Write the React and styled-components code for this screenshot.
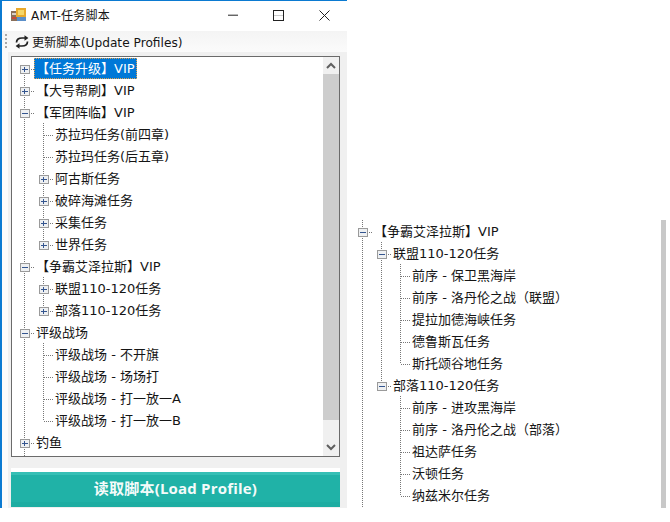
import styled, { createGlobalStyle } from 'styled-components'

const GlobalStyle = createGlobalStyle`
html, body {
    margin: 0;
    background: #fff;
}
`

const Page = styled.div`
display: flex;
align-items: flex-start;
width: 670px;
height: 522px;
overflow: hidden;
font-family: "DejaVu Sans", "Noto Sans CJK SC", sans-serif;
font-size: 13px;
color: #151515;
`

const Window = styled.div`
display: flex;
flex-direction: column;
flex: none;
width: 345px;
height: 507px;
border-top: 1px solid #0b7ad1;
border-left: 2px solid #0b7ad1;
background: #fff;
`

const TitleBar = styled.div`
display: flex;
align-items: center;
flex: none;
height: 28px;
padding: 0 0 2px 9px;
`

const AppIcon = styled.svg`
flex: none;
width: 15px;
height: 14px;
margin-right: 5px;
`

const Title = styled.div`
flex: 1;
margin-bottom: 2px;
font-size: 12px;
letter-spacing: 0.25px;
`

const WinButton = styled.div`
display: flex;
align-items: center;
justify-content: center;
flex: none;
width: 45.5px;
height: 28px;
`

const Toolbar = styled.div`
display: flex;
align-items: center;
flex: none;
height: 21px;
padding-left: 3px;
background: linear-gradient(#f4f4f4, #fbfbfb);
`

const Grip = styled.div`
flex: none;
width: 2px;
height: 15px;
margin-right: 8px;
background: repeating-linear-gradient(#a8a8a8 0 2px, transparent 2px 4px);
`

const ToolIcon = styled.svg`
flex: none;
width: 14px;
height: 14px;
margin-right: 3px;
`

const ToolLabel = styled.div`
font-size: 12.2px;
`

const Body = styled.div`
display: flex;
flex-direction: column;
flex: 1;
padding: 4px 7px 1px 3px;
border-left: 6px solid #fbfbfb;
background: #f0f0f0;
`

const TreeBox = styled.div`
display: flex;
flex: none;
height: 399px;
border: 1px solid #6b6b6b;
background: #fff;
`

const TreeScroll = styled.div`
flex: 1;
height: 399px;
padding-left: 3px;
overflow: hidden;
`

const Row = styled.div`
display: flex;
align-items: center;
height: 22px;
white-space: nowrap;
`

const Guides = styled.svg`
display: block;
flex: none;
width: ${({ $cells }) => $cells * 19}px;
height: 22px;
`

const Label = styled.div`
height: 21px;
margin-top: 1px;
padding: 0 2px;
line-height: 22px;
box-sizing: border-box;
color: ${({ $selected }) => ($selected ? '#fff' : 'inherit')};
background: ${({ $selected }) => ($selected ? '#0078d7' : 'transparent')};
outline: ${({ $selected }) => ($selected ? '1px dotted #e0a050' : 'none')};
outline-offset: -1px;
`

const ScrollBar = styled.div`
display: flex;
flex-direction: column;
flex: none;
width: 16px;
background: #f0f0f0;
`

const ScrollArrow = styled.div`
display: flex;
align-items: center;
justify-content: center;
flex: none;
height: 17px;
`

const ScrollThumb = styled.div`
flex: none;
height: 346px;
background: #cdcdcd;
`

const ScrollTrack = styled.div`
flex: 1;
`

const LoadButton = styled.div`
display: flex;
align-items: center;
justify-content: center;
flex: none;
height: 39px;
margin-top: 11px;
padding-bottom: 4px;
box-sizing: border-box;
border-top: 4px solid #fff;
box-shadow: inset 0 3px 0 #35bfb5, inset 0 -5px 0 #1dada2;
background: #20b2a7;
color: #f4fbfa;
font-family: "Open Sans", "Noto Sans CJK SC", sans-serif;
font-size: 15px;
font-weight: 700;
letter-spacing: 0.2px;
`

const SidePanel = styled.div`
flex: none;
display: flex;
width: 323px;
height: 288px;
margin-top: 220px;
`

const SideTree = styled.div`
flex: 1;
padding-left: 6px;
overflow: hidden;
`

const SideBar = styled.div`
flex: none;
width: 5px;
margin-right: 4px;
background: #c8c8c8;
`

const Chevron = ({ down }) => (
    <svg width="10" height="7" viewBox="0 0 10 7">
        <path d={down ? 'M1 1l4 4 4-4' : 'M1 6l4-4 4 4'} fill="none" stroke="#5f5f5f" strokeWidth="2" />
    </svg>
)

// up, down, right: which dotted arms the cell has. box: '+' or '-'
const CELLS = {
    ' ': {},
    '|': { up: 1, down: 1 },
    T: { up: 1, down: 1, right: 1 },
    L: { up: 1, right: 1 },
    '+': { up: 1, down: 1, right: 1, box: '+' },
    '-': { up: 1, down: 1, right: 1, box: '-' },
    f: { down: 1, right: 1, box: '+' },
    e: { up: 1, right: 1, box: '+' },
    m: { up: 1, right: 1, box: '-' },
}

const Cell = ({ kind, index }) => {
    const c = CELLS[kind]
    const x = index * 19 + 9.5
    return (
        <g shapeRendering="crispEdges">
            {c.up && <line x1={x} y1="0" x2={x} y2="12" stroke="#777" strokeDasharray="1 1" />}
            {c.down && <line x1={x} y1="12" x2={x} y2="22" stroke="#777" strokeDasharray="1 1" />}
            {c.right && <line x1={x} y1="12.5" x2={x + 9.5} y2="12.5" stroke="#777" strokeDasharray="1 1" />}
            {c.box && (
                <>
                    <rect x={x - 4.5} y="8.5" width="9" height="8" fill="#eef0f2" stroke="#9a9a9a" />
                    <line x1={x - 2.5} y1="12.5" x2={x + 3} y2="12.5" stroke="#34558f" />
                    {c.box === '+' && <line x1={x} y1="10" x2={x} y2="15" stroke="#34558f" />}
                </>
            )}
        </g>
    )
}

const TreeRow = ({ g, t, selected }) => (
    <Row>
        <Guides $cells={g.length} viewBox={`0 0 ${g.length * 19} 22`}>
            {g.split('').map((kind, i) => (
                <Cell key={i} kind={kind} index={i} />
            ))}
        </Guides>
        {t && <Label $selected={selected}>{t}</Label>}
    </Row>
)

const mainRows = [
    { g: 'f', t: '【任务升级】VIP', selected: true },
    { g: '+', t: '【大号帮刷】VIP' },
    { g: '-', t: '【军团阵临】VIP' },
    { g: '|T', t: '苏拉玛任务(前四章)' },
    { g: '|T', t: '苏拉玛任务(后五章)' },
    { g: '|+', t: '阿古斯任务' },
    { g: '|+', t: '破碎海滩任务' },
    { g: '|+', t: '采集任务' },
    { g: '|e', t: '世界任务' },
    { g: '-', t: '【争霸艾泽拉斯】VIP' },
    { g: '|+', t: '联盟110-120任务' },
    { g: '|e', t: '部落110-120任务' },
    { g: '-', t: '评级战场' },
    { g: '|T', t: '评级战场 - 不开旗' },
    { g: '|T', t: '评级战场 - 场场打' },
    { g: '|T', t: '评级战场 - 打一放一A' },
    { g: '|L', t: '评级战场 - 打一放一B' },
    { g: '+', t: '钓鱼' },
    { g: '|' },
]

const sideRows = [
    { g: '-', t: '【争霸艾泽拉斯】VIP' },
    { g: '|-', t: '联盟110-120任务' },
    { g: '||T', t: '前序 - 保卫黑海岸' },
    { g: '||T', t: '前序 - 洛丹伦之战（联盟）' },
    { g: '||T', t: '提拉加德海峡任务' },
    { g: '||T', t: '德鲁斯瓦任务' },
    { g: '||L', t: '斯托颂谷地任务' },
    { g: '|m', t: '部落110-120任务' },
    { g: '| T', t: '前序 - 进攻黑海岸' },
    { g: '| T', t: '前序 - 洛丹伦之战（部落）' },
    { g: '| T', t: '祖达萨任务' },
    { g: '| T', t: '沃顿任务' },
    { g: '| L', t: '纳兹米尔任务' },
    { g: '|' },
]

const App = () => {
    return (
        <Page>
            <GlobalStyle />
            <Window>
                <TitleBar>
                    <AppIcon viewBox="0 0 15 14">
                        <rect x="0" y="3" width="6" height="10" fill="#8a6f5a" />
                        <rect x="1" y="5" width="4" height="2" fill="#d8d0c8" />
                        <rect x="1" y="9" width="4" height="2" fill="#c9483a" />
                        <rect x="5" y="0" width="10" height="9" fill="#e8a92c" />
                        <rect x="7" y="2" width="6" height="5" fill="#f7d768" />
                        <rect x="6" y="9" width="9" height="4" fill="#5b8fc9" />
                    </AppIcon>
                    <Title>AMT-任务脚本</Title>
                    <WinButton>
                        <svg width="10" height="3" viewBox="0 0 10 3">
                            <rect width="10" height="1" y="1" fill="#666" />
                            <rect width="10" height="1" y="0" fill="#bbb" />
                        </svg>
                    </WinButton>
                    <WinButton>
                        <svg width="11" height="11" viewBox="0 0 11 11">
                            <rect x="0.5" y="0.5" width="10" height="10" fill="none" stroke="#222" />
                            <line x1="1" y1="5.5" x2="10" y2="5.5" stroke="#ccc" />
                        </svg>
                    </WinButton>
                    <WinButton>
                        <svg width="11" height="11" viewBox="0 0 11 11">
                            <path d="M0.5 0.5l10 10M10.5 0.5l-10 10" stroke="#222" fill="none" />
                        </svg>
                    </WinButton>
                </TitleBar>
                <Toolbar>
                    <Grip />
                    <ToolIcon viewBox="0 0 14 14">
                        <path d="M1.5 7.5C1.5 4.5 4 3 7 3h3" fill="none" stroke="#222" strokeWidth="1.7" />
                        <path d="M9.5 0.2L13.4 3 9.5 5.8z" fill="#222" />
                        <path d="M12.5 6.5C12.5 9.5 10 11 7 11H4" fill="none" stroke="#222" strokeWidth="1.7" />
                        <path d="M4.5 8.2L0.6 11l3.9 2.8z" fill="#222" />
                    </ToolIcon>
                    <ToolLabel>更新脚本(Update Profiles)</ToolLabel>
                </Toolbar>
                <Body>
                    <TreeBox>
                        <TreeScroll>
                            {mainRows.map((row, index) => (
                                <TreeRow key={index} {...row} />
                            ))}
                        </TreeScroll>
                        <ScrollBar>
                            <ScrollArrow><Chevron /></ScrollArrow>
                            <ScrollThumb />
                            <ScrollTrack />
                            <ScrollArrow><Chevron down /></ScrollArrow>
                        </ScrollBar>
                    </TreeBox>
                    <LoadButton>读取脚本(Load Profile)</LoadButton>
                </Body>
            </Window>
            <SidePanel>
                <SideTree>
                    {sideRows.map((row, index) => (
                        <TreeRow key={index} {...row} />
                    ))}
                </SideTree>
                <SideBar />
            </SidePanel>
        </Page>
    )
}

export default App
